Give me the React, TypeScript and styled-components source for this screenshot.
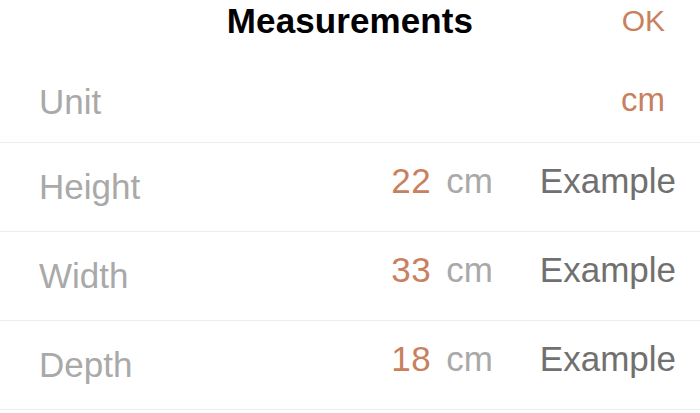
import React from "react";
import styled, { createGlobalStyle } from "styled-components";

const Global = createGlobalStyle`
  html, body { margin: 0; padding: 0; background: #fff; }
  body { font-family: "Liberation Sans", Arial, sans-serif; -webkit-font-smoothing: antialiased; }
`;

const ACCENT = "#c8805e";

const Screen = styled.div`
  width: 700px;
  height: 413px;
  background: #fff;
  overflow: hidden;
  display: flex;
  flex-direction: column;
`;

const Header = styled.div`
  height: 55px;
  box-sizing: border-box;
  padding: 0 35px 14px 35px;
  display: grid;
  grid-template-columns: 1fr auto 1fr;
  align-items: center;
`;

const Title = styled.div`
  grid-column: 2;
  font-size: 35px;
  font-weight: 700;
  color: #000;
  letter-spacing: 0.1px;
`;

const Done = styled.div`
  justify-self: end;
  font-size: 30px;
  color: ${ACCENT};
`;

const Row = styled.div<{ $h: number; $pt: number; $pb: number }>`
  height: ${(p) => p.$h}px;
  display: flex;
  align-items: center;
  padding: ${(p) => p.$pt}px 24px ${(p) => p.$pb}px 39px;
  border-bottom: 1px solid #ececec;
  box-sizing: border-box;
`;

const Label = styled.div<{ $shift: number }>`
  flex: 1;
  font-size: 35px;
  color: #a9a9a9;
  padding-top: ${(p) => p.$shift}px;
`;

const UnitValue = styled.div`
  font-size: 33px;
  color: ${ACCENT};
  margin-right: 11px;
`;

const Number = styled.div`
  font-size: 35px;
  color: ${ACCENT};
  letter-spacing: 0.5px;
`;

const Suffix = styled.div`
  font-size: 35px;
  color: #a9a9a9;
  margin-left: 15px;
`;

const Example = styled.div`
  font-size: 35px;
  color: #707070;
  margin-left: 47px;
`;

const rows = [
  { label: "Height", value: "22" },
  { label: "Width", value: "33" },
  { label: "Depth", value: "18" },
];

export default function App() {
  return (
    <Screen>
      <Global />
      <Header>
        <Title>Measurements</Title>
        <Done>OK</Done>
      </Header>
      <Row $h={88} $pt={2} $pb={0}>
        <Label $shift={5}>Unit</Label>
        <UnitValue>cm</UnitValue>
      </Row>
      {rows.map((r) => (
        <Row key={r.label} $h={89} $pt={0} $pb={12}>
          <Label $shift={11}>{r.label}</Label>
          <Number>{r.value}</Number>
          <Suffix>cm</Suffix>
          <Example>Example</Example>
        </Row>
      ))}
    </Screen>
  );
}
